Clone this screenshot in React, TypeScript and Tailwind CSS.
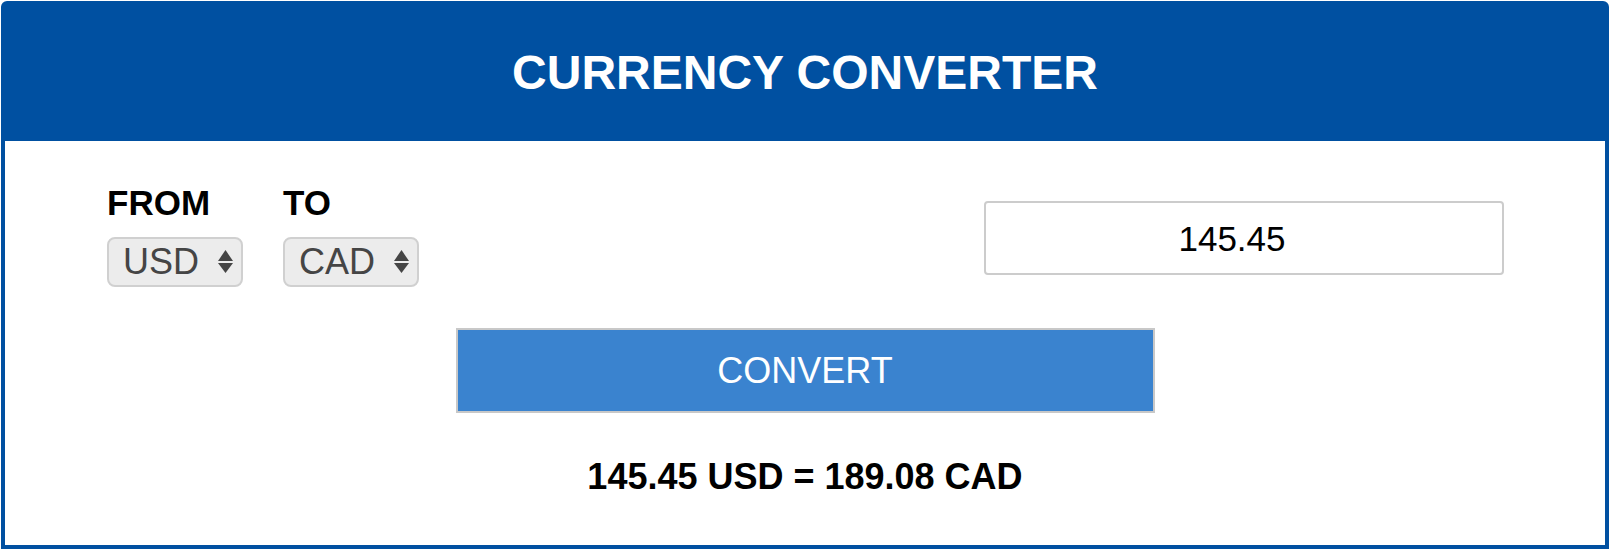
import React from "react";

function Arrows() {
  return (
    <svg width="15" height="24" viewBox="0 0 15 24" className="shrink-0">
      <polygon points="0,11 7.5,0 15,11" fill="#454545" />
      <polygon points="0,13 7.5,23 15,13" fill="#454545" />
    </svg>
  );
}

function FakeSelect({ value }: { value: string }) {
  return (
    <div className="flex items-center w-[136px] h-[50px] rounded-[8px] border-2 border-[#d0d0d0] bg-[#ececec] pl-[14px] pr-[8px] justify-between">
      <span className="text-[36px] leading-none text-[#454545]">{value}</span>
      <Arrows />
    </div>
  );
}

export default function App() {
  return (
    <div
      className="mt-px ml-px w-[1608px] h-[548px] border-4 border-[#0050a1] rounded-t-[6px] flex flex-col bg-white"
      style={{ fontFamily: '"Liberation Sans", Arial, sans-serif' }}
    >
      <div className="h-[136px] bg-[#0050a1] flex items-center justify-center">
        <h1 className="text-white font-bold text-[48px] leading-none">CURRENCY CONVERTER</h1>
      </div>
      <div className="flex-1 flex flex-col pt-[44px]">
        <div className="flex items-start justify-between pl-[102px] pr-[101px]">
          <div className="flex gap-[40px]">
            <div className="flex flex-col gap-[17px]">
              <span className="text-[35px] font-bold leading-none text-black">FROM</span>
              <FakeSelect value="USD" />
            </div>
            <div className="flex flex-col gap-[17px]">
              <span className="text-[35px] font-bold leading-none text-black">TO</span>
              <FakeSelect value="CAD" />
            </div>
          </div>
          <div className="mt-[16px] w-[520px] h-[74px] border-2 border-[#cccccc] rounded-[4px] flex items-center justify-center pr-[24px]">
            <span className="text-[35px] leading-none text-black">145.45</span>
          </div>
        </div>
        <div className="flex justify-center mt-[41px]">
          <div className="w-[699px] h-[85px] bg-[#3a83cf] border-2 border-[#c8c8c8] flex items-center justify-center">
            <span className="text-white text-[36px] leading-none">CONVERT</span>
          </div>
        </div>
        <div className="flex justify-center mt-[46px]">
          <span className="text-black font-bold text-[36px] leading-none">145.45 USD = 189.08 CAD</span>
        </div>
      </div>
    </div>
  );
}
